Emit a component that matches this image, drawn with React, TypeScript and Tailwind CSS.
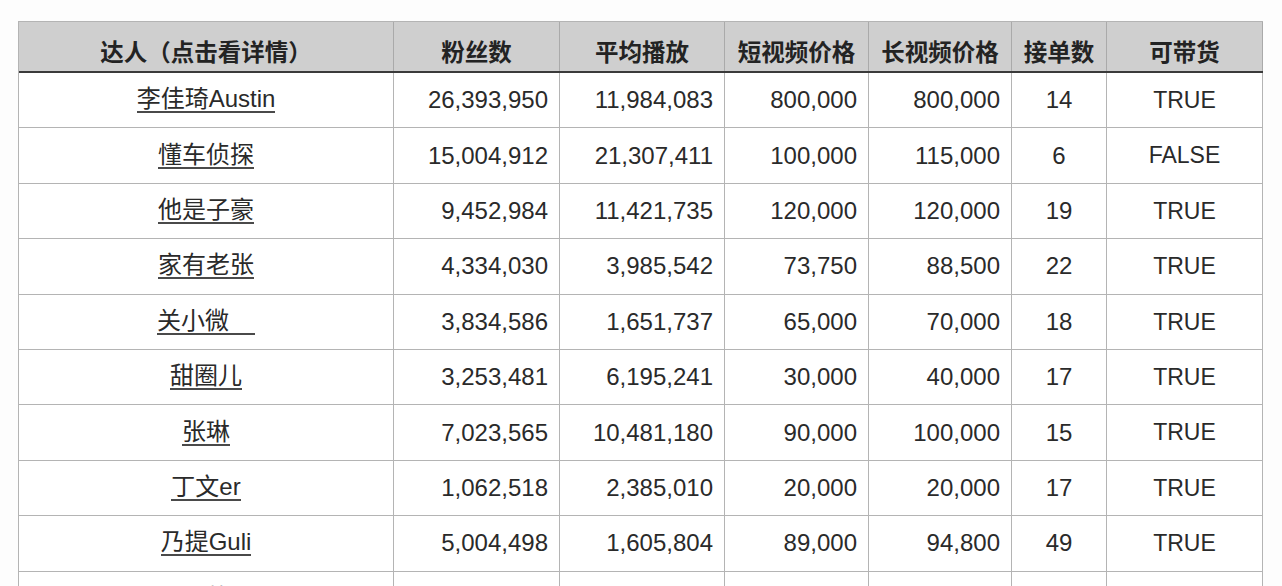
const headers = ['达人（点击看详情）', '粉丝数', '平均播放', '短视频价格', '长视频价格', '接单数', '可带货'];

const rows: [string, string, string, string, string, string, string][] = [
    ['李佳琦Austin', '26,393,950', '11,984,083', '800,000', '800,000', '14', 'TRUE'],
    ['懂车侦探', '15,004,912', '21,307,411', '100,000', '115,000', '6', 'FALSE'],
    ['他是子豪', '9,452,984', '11,421,735', '120,000', '120,000', '19', 'TRUE'],
    ['家有老张', '4,334,030', '3,985,542', '73,750', '88,500', '22', 'TRUE'],
    ['关小微', '3,834,586', '1,651,737', '65,000', '70,000', '18', 'TRUE'],
    ['甜圈儿', '3,253,481', '6,195,241', '30,000', '40,000', '17', 'TRUE'],
    ['张琳', '7,023,565', '10,481,180', '90,000', '100,000', '15', 'TRUE'],
    ['丁文er', '1,062,518', '2,385,010', '20,000', '20,000', '17', 'TRUE'],
    ['乃提Guli', '5,004,498', '1,605,804', '89,000', '94,800', '49', 'TRUE'],
    ['王乾', '', '', '', '', '', ''],
];

const cols = 'grid grid-cols-[375px_166px_165px_144px_143px_95px_156px]';

export default function App() {
    return (
        <div
            className="w-[1282px] h-[586px] overflow-hidden bg-[#fdfdfd] pt-[21px] pl-[18px] text-[#2a2a2a]"
            style={{ fontFamily: '"Liberation Sans", "Noto Sans CJK SC", Arial, sans-serif' }}
        >
            <div className="w-[1245px] border-l border-t border-[#b4b4b4]">
                <div className={`${cols} h-[51px] bg-[#cfcfcf] border-b-2 border-[#3a3a3a]`}>
                    {headers.map((h) => (
                        <div
                            key={h}
                            className="flex items-center justify-center pt-[10px] border-r border-[#aaaaaa] text-[23.5px] font-bold text-[#232323] whitespace-nowrap"
                            style={{ fontFamily: '"Noto Sans CJK SC", sans-serif' }}
                        >
                            {h}
                        </div>
                    ))}
                </div>
                {rows.map((r) => (
                    <div key={r[0]} className={`${cols} h-[55.4px] bg-white`}>
                        <div className="flex items-center justify-center border-r border-b border-[#b4b4b4]">
                            <span
                                className={`inline-block leading-none text-[24px] border-b-2 border-[#4a4a4a] ${
                                    r[0] === '关小微' ? 'pr-[26px]' : ''
                                }`}
                            >
                                {r[0]}
                            </span>
                        </div>
                        {r.slice(1, 5).map((v, i) => (
                            <div
                                key={i}
                                className="flex items-center justify-end pr-[11px] border-r border-b border-[#b4b4b4] text-[24px]"
                            >
                                {v}
                            </div>
                        ))}
                        <div className="flex items-center justify-center border-r border-b border-[#b4b4b4] text-[24px]">
                            {r[5]}
                        </div>
                        <div className="flex items-center justify-center border-r border-b border-[#b4b4b4] text-[23px]">
                            {r[6]}
                        </div>
                    </div>
                ))}
            </div>
        </div>
    );
}
